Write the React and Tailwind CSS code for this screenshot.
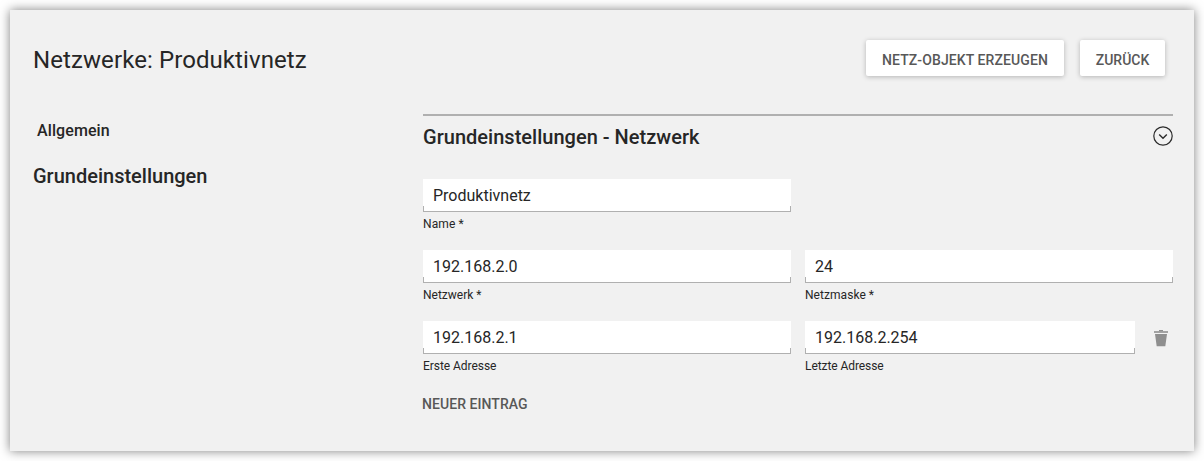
function Field({ value, label, className, labelClass = "" }) {
  return (
    <div className={className}>
      <div className="relative h-[33px] bg-white border-b border-[#b0b0b0] pl-[10px] text-[16px] leading-[33px] text-[#262626]">
        <span className="absolute left-0 bottom-0 h-[5px] w-px bg-[#b0b0b0]" />
        {value}
        <span className="absolute right-0 bottom-0 h-[5px] w-px bg-[#b0b0b0]" />
      </div>
      <div className={`mt-[4px] h-4 text-[12px] leading-4 text-[#262626] ${labelClass}`}>{label}</div>
    </div>
  );
}

export default function App() {
  return (
    <div className="h-[461px] w-[1204px] overflow-hidden bg-white px-[10px] pt-[10px] font-['Roboto',sans-serif] text-[#262626]">
      <main className="h-[441px] w-[1184px] bg-[#f1f1f1] shadow-[0_0_10px_rgba(0,0,0,0.5)]">
        <header className="flex h-[104px] items-start justify-between pl-[23px] pr-[29px] pt-[30px]">
          <h1 className="text-[24px] leading-[40px] tracking-[0.09px]">Netzwerke: Produktivnetz</h1>
          <div className="flex gap-4 text-[14px] font-medium leading-[40px] text-[#585858]">
            <button className="h-9 w-[198px] rounded-[2px] bg-white tracking-[0.1px] shadow-[0_1px_5px_rgba(0,0,0,0.25)]">NETZ-OBJEKT ERZEUGEN</button>
            <button className="h-9 w-[85px] rounded-[2px] bg-white shadow-[0_1px_5px_rgba(0,0,0,0.25)]">ZURÜCK</button>
          </div>
        </header>
        <div className="flex">
          <nav className="w-[413px] shrink-0 pl-[23px] font-medium">
            <div className="pl-1 pt-[5px] text-[16px] leading-6 tracking-[0.1px]">Allgemein</div>
            <div className="mt-[21px] text-[20px] leading-6">Grundeinstellungen</div>
          </nav>
          <section className="w-[750px]">
            <div className="flex h-[65px] items-start justify-between border-t-2 border-[#b0b0b0]">
              <h2 className="pt-[9px] text-[20px] font-medium leading-6 tracking-[0.02px]">Grundeinstellungen - Netzwerk</h2>
              <svg className="mt-[10px]" width="20" height="20" viewBox="0 0 20 20" fill="none" stroke="#2b2b2b" strokeWidth="1.2">
                <circle cx="10" cy="10" r="9.2" />
                <path d="M6.200 8.500l3.800 3.800 3.800-3.800" strokeWidth="1.400" />
              </svg>
            </div>
            <div className="flex h-[71px]"><Field className="w-[368px]" value="Produktivnetz" label="Name *" labelClass="tracking-[0.1px]" /></div>
            <div className="flex h-[71px] gap-[14px]">
              <Field className="w-[368px]" value="192.168.2.0" label="Netzwerk *" />
              <Field className="w-[368px]" value="24" label="Netzmaske *" labelClass="tracking-[0.05px]" />
            </div>
            <div className="flex h-[71px] gap-[14px]">
              <Field className="w-[368px]" value="192.168.2.1" label="Erste Adresse" labelClass="tracking-[-0.05px]" />
              <Field className="w-[330px]" value="192.168.2.254" label="Letzte Adresse" labelClass="tracking-[-0.07px]" />
              <svg className="ml-[5px] mt-[9px]" width="14" height="17" viewBox="0 0 14 17" fill="#8f8f8f">
                <path d="M0 1h5V0h4v1h5v2H0z" fill="#a3a3a3" />
                <path d="M5 0h4v1.200H5zM1 4h12l-1.700 12.200H2.700z" />
              </svg>
            </div>
            <div className="-ml-px text-[14px] font-medium leading-6 tracking-[0.06px] text-[#585858]">NEUER EINTRAG</div>
          </section>
        </div>
      </main>
    </div>
  );
}
